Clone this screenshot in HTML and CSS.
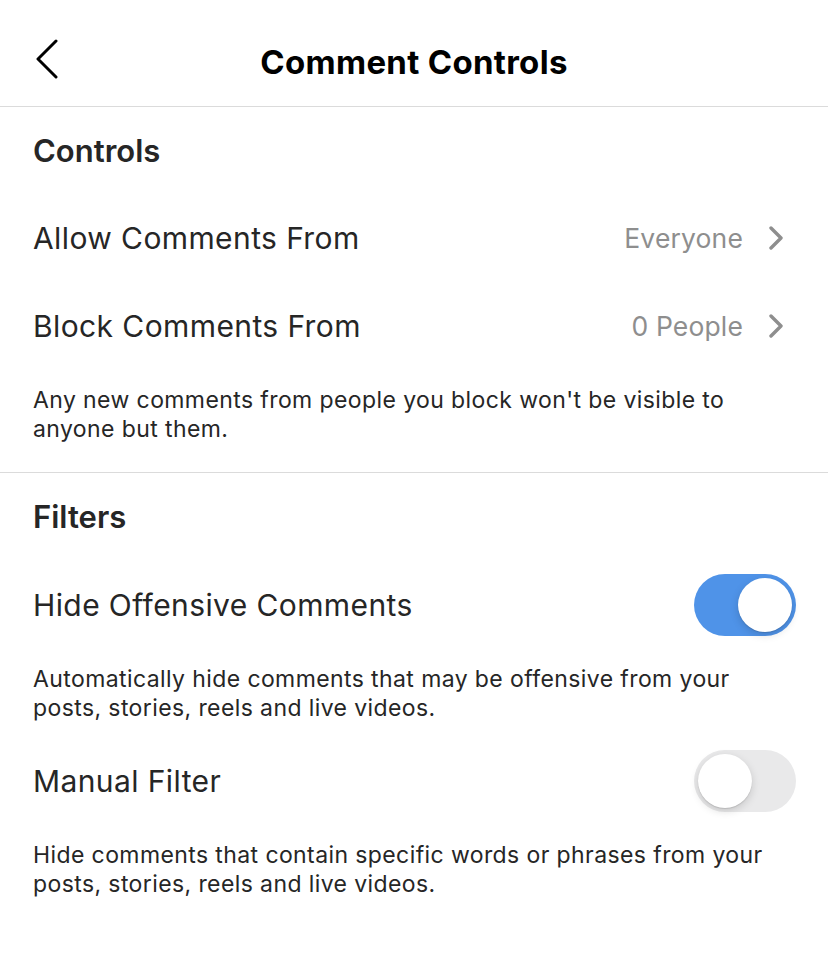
FILE: index.html
```html
<!DOCTYPE html>
<html lang="en">
<head>
  <meta charset="UTF-8">
  <meta name="viewport" content="width=device-width, initial-scale=1">
  <title>Comment Controls</title>
  <link rel="stylesheet" href="styles.css">
</head>
<body>

<div class="topbar">
  <span class="back">
    <svg width="24" height="40" viewBox="0 0 24 40"><path d="M21 2 L3 20 L21 38" fill="none" stroke="#000" stroke-width="3" stroke-linecap="round" stroke-linejoin="round"/></svg>
  </span>
  <h1>Comment Controls</h1>
</div>

<div class="section">
  <h2>Controls</h2>

  <div class="row">
    <span class="label">Allow Comments From</span>
    <span class="value">Everyone</span>
    <svg class="chev" width="14" height="24" viewBox="0 0 14 24"><path d="M2 2 L12 12 L2 22" fill="none" stroke="#8e8e8e" stroke-width="3.4" stroke-linecap="round" stroke-linejoin="round"/></svg>
  </div>

  <div class="row">
    <span class="label">Block Comments From</span>
    <span class="value">0 People</span>
    <svg class="chev" width="14" height="24" viewBox="0 0 14 24"><path d="M2 2 L12 12 L2 22" fill="none" stroke="#8e8e8e" stroke-width="3.4" stroke-linecap="round" stroke-linejoin="round"/></svg>
  </div>

  <p class="note">Any new comments from people you block won't be visible to anyone but them.</p>
</div>

<div class="section">
  <h2>Filters</h2>

  <div class="row">
    <span class="label">Hide Offensive Comments</span>
    <span class="switch on"><span class="knob"></span></span>
  </div>
  <p class="note">Automatically hide comments that may be offensive from your posts, stories, reels and live videos.</p>

  <div class="row">
    <span class="label">Manual Filter</span>
    <span class="switch"><span class="knob"></span></span>
  </div>
  <p class="note">Hide comments that contain specific words or phrases from your posts, stories, reels and live videos.</p>
</div>

</body>
</html>
```

FILE: styles.css
```css
/* general */
body {
  margin: 0;
  background: #fff;
  font-family: Inter, "Noto Sans", sans-serif;
  color: #262626;
  width: 828px;
}
.topbar {
  height: 106px;
  border-bottom: 1px solid #dbdbdb;
  display: flex;
  align-items: center;
  justify-content: center;
  position: relative;
}
.back {
  position: absolute;
  left: 35px;
  top: 39px;
}
.topbar h1 {
  margin: 0;
  font-size: 33px;
  font-weight: 700;
  color: #000;
  letter-spacing: 0.3px;
  padding-top: 18px;
}
.section {
  padding: 0 33px 14px 33px;
  border-bottom: 1px solid #dbdbdb;
}
.section:last-child {
  border-bottom: none;
}
.section h2 {
  margin: 0;
  font-size: 31px;
  font-weight: 600;
  height: 87px;
  line-height: 87px;
}
.section + .section h2 {
  height: 88px;
  line-height: 87px;
}
.row {
  display: flex;
  align-items: center;
  height: 88px;
}
.label {
  flex: 1;
  font-size: 30px;
  font-weight: 400;
  letter-spacing: 0.4px;
}
.value {
  font-size: 26.5px;
  letter-spacing: 0.15px;
  color: #8e8e8e;
  margin-right: 26px;
}
.chev {
  margin-right: 12px;
}
.note {
  margin: 0;
  font-size: 23px;
  letter-spacing: 0.4px;
  line-height: 29px;
  padding: 16px 0 14px;
}
.switch {
  width: 102px;
  height: 62px;
  border-radius: 31px;
  background: #e9e9ea;
  position: relative;
  margin-right: -1px;
}
.switch .knob {
  position: absolute;
  top: 4px;
  left: 4px;
  width: 54px;
  height: 54px;
  border-radius: 50%;
  background: #fff;
  box-shadow: 0 3px 8px rgba(0, 0, 0, 0.15), 0 1px 1px rgba(0, 0, 0, 0.12);
}
.switch.on {
  background: #4f93e8;
}
.switch.on .knob {
  left: 44px;
}
```
